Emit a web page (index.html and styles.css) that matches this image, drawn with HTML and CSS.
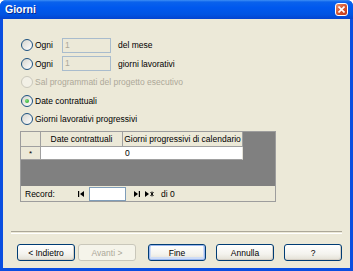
FILE: index.html
```html
<!DOCTYPE html>
<html lang="it">
<head>
    <meta charset="UTF-8" />
    <title>Giorni</title>
    <link rel="stylesheet" href="styles.css">
</head>
<body>
    <div class="window">
        <div class="titlebar">
            <span class="title">Giorni</span>
            <span class="close">
                <svg width="7" height="7" viewBox="0 0 7 7"><path d="M0.5 0.5 L6.5 6.5 M6.5 0.5 L0.5 6.5" stroke="#fff" stroke-width="1.6"/></svg>
            </span>
        </div>
        <div class="client">
            <div class="options">
                <div class="option">
                    <span class="radio"></span>
                    <span class="lead">Ogni</span>
                    <span class="textbox">1</span>
                    <span class="suffix">del mese</span>
                </div>
                <div class="option">
                    <span class="radio"></span>
                    <span class="lead">Ogni</span>
                    <span class="textbox">1</span>
                    <span class="suffix">giorni lavorativi</span>
                </div>
                <div class="option disabled">
                    <span class="radio"></span>
                    <span>Sal programmati del progetto esecutivo</span>
                </div>
                <div class="option">
                    <span class="radio checked"></span>
                    <span>Date contrattuali</span>
                </div>
                <div class="option">
                    <span class="radio"></span>
                    <span>Giorni lavorativi progressivi</span>
                </div>
            </div>

            <div class="grid">
                <div class="grid-body">
                    <div class="grid-row header">
                        <div class="cell selector"></div>
                        <div class="cell col-date">Date contrattuali</div>
                        <div class="cell col-days">Giorni progressivi di calendario</div>
                    </div>
                    <div class="grid-row data">
                        <div class="cell selector">*</div>
                        <div class="cell col-date"></div>
                        <div class="cell col-days">0</div>
                    </div>
                </div>
                <div class="recordbar">
                    <span class="rec-label">Record:</span>
                    <span class="nav first">
                        <svg width="6" height="6" viewBox="0 0 6 6"><rect x="0" y="0" width="1.2" height="6" fill="#000"/><path d="M6 0 L2 3 L6 6 Z" fill="#000"/></svg>
                    </span>
                    <span class="rec-input"></span>
                    <span class="nav next">
                        <svg width="6" height="6" viewBox="0 0 6 6"><path d="M0 0 L4 3 L0 6 Z" fill="#000"/><rect x="4.8" y="0" width="1.2" height="6" fill="#000"/></svg>
                    </span>
                    <span class="nav new">
                        <svg width="9" height="6" viewBox="0 0 9 6"><path d="M0 0 L4 3 L0 6 Z" fill="#000"/><path d="M5.5 1 L8.5 5 M8.5 1 L5.5 5 M7 0.5 L7 5.5" stroke="#000" stroke-width="0.9"/></svg>
                    </span>
                    <span class="rec-total">di 0</span>
                </div>
            </div>

            <div class="separator"></div>

            <div class="buttons">
                <div class="pair">
                    <button>&lt; Indietro</button>
                    <button disabled>Avanti &gt;</button>
                </div>
                <button class="default">Fine</button>
                <button>Annulla</button>
                <button>?</button>
            </div>
        </div>
    </div>
</body>
</html>
```
FILE: styles.css
```css
body {
    margin: 0;
    background: #ffffff;
    font-family: 'Liberation Sans', Arial, sans-serif;
    font-size: 8.5px;
    color: #000000;
}

.window {
    width: 353px;
    height: 271px;
    box-sizing: border-box;
    display: flex;
    flex-direction: column;
    background: #0a4ee0;
    border-radius: 6px 6px 0 0;
    overflow: hidden;
}

/* Title bar */
.titlebar {
    height: 19px;
    flex: none;
    display: flex;
    align-items: center;
    justify-content: space-between;
    padding: 0 5px 0 5px;
    background: linear-gradient(#3d8ff5 0, #0a62ec 2px, #0058ee 40%, #0054e3 75%, #0444cf 100%);
}

.title {
    color: #ffffff;
    font-weight: bold;
    font-size: 10.5px;
    text-shadow: 1px 1px 0 #0c2a8c;
    padding-bottom: 1px;
}

.close {
    width: 11px;
    height: 11px;
    border: 1px solid #ffffff;
    border-radius: 3px;
    background: linear-gradient(135deg, #e9916f 0%, #d5542f 50%, #c13a1a 100%);
    display: flex;
    justify-content: center;
    align-items: center;
}

/* Client area */
.client {
    flex: 1;
    margin: 0 3px 3px 3px;
    background: #ece9d8;
    display: flex;
    flex-direction: column;
}

.options {
    padding: 17px 0 0 18px;
    display: flex;
    flex-direction: column;
}

.option {
    height: 18.5px;
    display: flex;
    align-items: center;
}

.option.disabled {
    color: #aca899;
}

.radio {
    width: 10px;
    height: 10px;
    border: 1px solid #1c5180;
    border-radius: 50%;
    background: linear-gradient(135deg, #d6d5ce, #ffffff);
    margin-right: 2px;
    display: flex;
    justify-content: center;
    align-items: center;
    flex: none;
}

.disabled .radio {
    border-color: #cac8bb;
    background: #f2f0e6;
}

.radio.checked::after {
    content: "";
    width: 4px;
    height: 4px;
    border-radius: 50%;
    background: radial-gradient(circle at 35% 35%, #7ee07e, #21a121);
}

.lead {
    width: 27px;
}

.textbox {
    width: 47px;
    height: 13px;
    border: 1px solid #a9bccd;
    background: #ece9d8;
    color: #aca899;
    padding-left: 2px;
    box-sizing: content-box;
    width: 45px;
    line-height: 13px;
    margin-right: 7px;
}

/* Subform grid */
.grid {
    margin: 2.5px 0 0 17px;
    width: 256px;
    height: 71px;
    box-sizing: border-box;
    border: 1px solid #9d9d9d;
    display: flex;
    flex-direction: column;
}

.grid-body {
    flex: 1;
    background: #808080;
}

.grid-row {
    display: flex;
}

.cell {
    box-sizing: border-box;
    white-space: nowrap;
    overflow: hidden;
}

.header .cell {
    height: 15px;
    line-height: 14px;
    background: #ece9d8;
    border-right: 1px solid #a0a0a0;
    border-bottom: 1px solid #a0a0a0;
    text-align: center;
}

.data .cell {
    height: 13px;
    line-height: 12px;
    background: #ffffff;
    border-right: 1px solid #e4e2d8;
    border-bottom: 1px solid #a0a0a0;
}

.data .selector {
    background: #ece9d8;
    border-right: 1px solid #a0a0a0;
    text-align: center;
    font-size: 8px;
    line-height: 13px;
}

.selector {
    width: 20px;
}

.col-date {
    width: 82px;
}

.col-days {
    width: 120px;
}

.data .col-date {
    border-right: none;
}

.data .col-days {
    padding-left: 2px;
}

.recordbar {
    height: 15px;
    flex: none;
    display: flex;
    align-items: center;
    background: #ece9d8;
    padding-left: 4px;
}

.rec-label {
    width: 53px;
}

.nav {
    display: flex;
    align-items: center;
}

.first {
    margin-right: 5px;
}

.rec-input {
    width: 35px;
    height: 12px;
    border: 1px solid #7f9db9;
    background: #ffffff;
    margin-right: 8px;
}

.next {
    margin-right: 5px;
}

.rec-total {
    margin-left: 7px;
}

/* Separator and buttons */
.separator {
    margin: 29px 8px 0 8px;
    height: 1px;
    border-top: 1px solid #aca899;
    border-bottom: 1px solid #ffffff;
}

.buttons {
    margin-top: 10px;
    padding: 0 8px 0 14px;
    display: flex;
    gap: 10px;
}

.pair {
    display: flex;
    gap: 3px;
    margin-right: 2px;
}

button {
    width: 58px;
    height: 17px;
    padding: 0;
    font-family: 'Liberation Sans', Arial, sans-serif;
    font-size: 8.5px;
    color: #000000;
    border: 1px solid #003c74;
    border-radius: 3px;
    background: linear-gradient(#ffffff 0%, #f4f3ee 60%, #e3e0d5 100%);
    box-shadow: inset -1px -1px 0 #d6d0c5;
}

button.default {
    box-shadow: inset 0 0 0 1px #9ab7ef, inset 0 -1px 0 2px #cfdcf5;
}

button:disabled {
    color: #aca899;
    border-color: #c9c7ba;
    background: #f5f4ea;
    box-shadow: none;
}
```
